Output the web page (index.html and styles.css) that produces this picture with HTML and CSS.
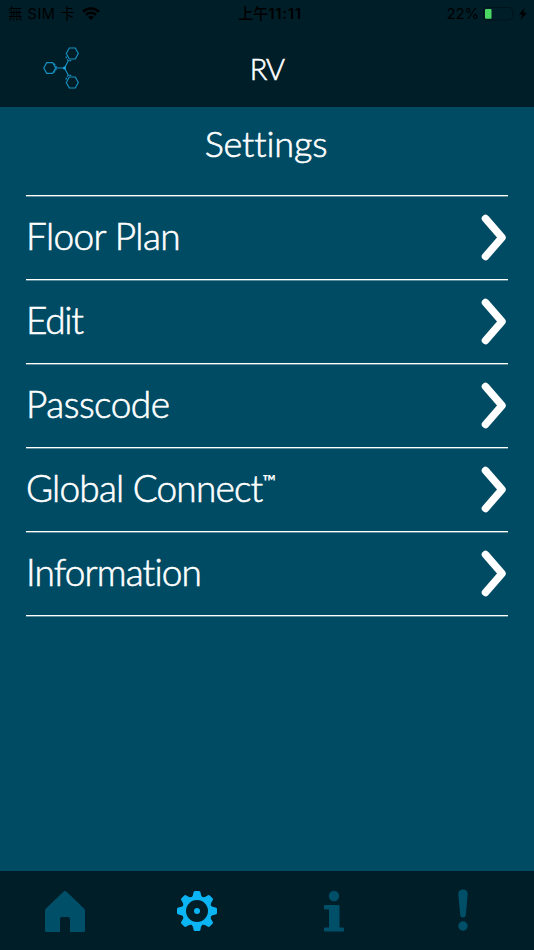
FILE: index.html
```html
<!DOCTYPE html>
<html lang="en">
<head>
  <meta charset="UTF-8">
  <meta name="viewport" content="width=device-width, initial-scale=1.0">
  <title>RV - Settings</title>
  <link rel="stylesheet" href="styles.css">
</head>
<body>
  <header class="top">
    <div class="status-bar">
      <div class="status-left">
        <span class="carrier">無 SIM 卡</span>
        <svg class="wifi" width="18" height="13" viewBox="0 0 18 13" fill="none" stroke="#000" stroke-width="2.5">
          <path d="M1 4.8a11.4 11.4 0 0 1 16 0"/>
          <path d="M3.9 7.9a7.3 7.3 0 0 1 10.2 0"/>
          <path d="M9 13 6.2 10.2a4 4 0 0 1 5.6 0z" fill="#000" stroke="none"/>
        </svg>
      </div>
      <div class="clock">上午<span class="digits">11:11</span></div>
      <div class="status-right">
        <span class="percent">22%</span>
        <svg width="46" height="14" viewBox="0 0 46 14">
          <rect x=".5" y=".5" width="29" height="12.5" rx="3.5" fill="none" stroke="#00131a"/>
          <rect x="2" y="2" width="6.5" height="9.7" rx="1" fill="#4bd964"/>
          <path d="M31.5 4.5q1.8 2 0 4.5z" fill="#00131a"/>
          <path d="M41.5 1 36 7.5h3.4L37.5 12.8l6.5-7h-3.6z" fill="#000"/>
        </svg>
      </div>
    </div>
    <div class="title-bar">
      <svg class="logo" width="36" height="42" viewBox="0 0 36 42" fill="none" stroke="#168fc0" stroke-width="1.2">
        <path d="M13 21h8.5M21.5 21l4-7.5M21.5 21l4 7.5"/>
        <path d="M.8 21 3.7 15.7h6L12.7 21l-3 5.3h-6z"/>
        <path d="M23.3 6.5l3-5.5h6l3 5.5-3 5.5h-6z"/>
        <path d="M23.3 35.500l3-5.500h6l3 5.500-3 5.500h-6z"/>
        <path d="M11.200 16.500 13.800 21l-2.600 4.500M22.800 9.500l2.200 4.200h4.200M22.800 32.500l2.200-4.200h4.200" stroke-dasharray="2 1"/>
        <circle cx="21.5" cy="21" r="1.5" fill="#1aa7df" stroke="none"/>
      </svg>
      <h1>RV</h1>
    </div>
  </header>

  <main class="settings">
    <h2>Settings</h2>
    <ul class="menu">
      <li class="menu-item">
        <span class="label floor">Floor Plan</span>
        <svg class="chevron" viewBox="0 0 26 48"><path d="M4.500 4.500 21 23.500 4.500 42.500"/></svg>
      </li>
      <li class="menu-item">
        <span class="label edit">Edit</span>
        <svg class="chevron" viewBox="0 0 26 48"><path d="M4.500 4.500 21 23.500 4.500 42.500"/></svg>
      </li>
      <li class="menu-item">
        <span class="label passcode">Passcode</span>
        <svg class="chevron" viewBox="0 0 26 48"><path d="M4.500 4.500 21 23.500 4.500 42.500"/></svg>
      </li>
      <li class="menu-item">
        <span class="label global">Global Connect<span class="tm">™</span></span>
        <svg class="chevron" viewBox="0 0 26 48"><path d="M4.500 4.500 21 23.500 4.500 42.500"/></svg>
      </li>
      <li class="menu-item">
        <span class="label info">Information</span>
        <svg class="chevron" viewBox="0 0 26 48"><path d="M4.500 4.500 21 23.500 4.500 42.500"/></svg>
      </li>
    </ul>
  </main>

  <nav class="tab-bar">
    <a class="tab">
      <svg width="42" height="44" viewBox="0 0 42 44">
        <path d="M19.400 2.700q1.600-1.500 3.200 0L40.500 20q.5.600.5 1.500V41.500q0 1.500-1.500 1.500H26V30q0-2-2-2h-6q-2 0-2 2V43H2.500Q1 43 1 41.500V21.500Q1 20.600 1.500 20z"/>
      </svg>
    </a>
    <a class="tab active">
      <svg width="42" height="42" viewBox="-21 -21 42 42">
        <path id="tooth" d="M-5.500-13.500Q-4-15-3.500-18.500q.2-1.500 1.500-1.500h4q1.300 0 1.500 1.500Q4-15 5.500-13.500z"/>
        <use href="#tooth" transform="rotate(45)"/>
        <use href="#tooth" transform="rotate(90)"/>
        <use href="#tooth" transform="rotate(135)"/>
        <use href="#tooth" transform="rotate(180)"/>
        <use href="#tooth" transform="rotate(225)"/>
        <use href="#tooth" transform="rotate(270)"/>
        <use href="#tooth" transform="rotate(315)"/>
        <circle class="ring" r="13"/>
        <circle r="3"/>
      </svg>
    </a>
    <a class="tab">
      <svg width="22" height="42" viewBox="0 0 22 42">
        <circle cx="11" cy="6" r="5.2"/>
        <path d="M2 15H15.500q1 0 1 1V37.500H20q1 0 1 1V40.500q0 1-1 1H2q-1 0-1-1V38.500q0-1 1-1H6V19.500H2q-1 0-1-1V16q0-1 1-1z"/>
      </svg>
    </a>
    <a class="tab">
      <svg width="12" height="44" viewBox="0 0 12 44">
        <path d="M1.300 5.500Q1.300 .5 6 .5T10.700 5.500L8.800 26q-.3 2.500-2.800 2.500T3.200 26z"/>
        <circle cx="6" cy="37" r="4.700"/>
      </svg>
    </a>
  </nav>
</body>
</html>
```
FILE: styles.css
```css
* {
  margin: 0; padding: 0; box-sizing: border-box;
}

body {
  display: flex; flex-direction: column;
  height: 100vh;
  overflow: hidden;
  background: #004b64;
  color: #fff;
  font-family: Lato, "Noto Sans CJK TC", sans-serif;
  font-weight: 300;
  font-variant-ligatures: none;
}

.top {
  height: 107px;
  background: #001e28;
}

.status-bar {
  display: grid;
  grid-template-columns: 1fr auto 1fr;
  align-items: center;
  height: 27px;
  padding: 0 5px 0 8px;
  color: #000;
  font: 400 15px/27px Inter, "Noto Sans CJK TC", sans-serif;
}

.status-left, .status-right { display: flex; align-items: center; }
.status-left { gap: 7px; }
.status-right { justify-content: flex-end; gap: 4px; }
.carrier { font-size: 14.5px; letter-spacing: .5px; }
.clock { font-size: 15px; font-weight: 500; padding-left: 3px; }
.digits { font-weight: 600; letter-spacing: .7px; }
.percent { letter-spacing: -.2px; }

.title-bar {
  display: grid;
  grid-template-columns: 1fr auto 1fr;
  align-items: center;
  height: 80px;
}

.logo { margin: 2px 0 0 43px; }

h1 {
  font-size: 29px;
  font-weight: 300;
  line-height: 40px;
  margin-top: 4px;
  letter-spacing: -.8px;
  -webkit-text-stroke: .6px #fff;
}

.settings {
  flex: 1;
  padding: 0 26px;
}

h2 {
  height: 88px;
  padding-right: 2px;
  font-size: 36px;
  font-weight: 300;
  line-height: 72px;
  letter-spacing: -.15px;
  text-align: center;
  -webkit-text-stroke: .6px #fff;
}

.menu {
  list-style: none;
  border-top: 1px solid #fff;
}

.menu-item {
  display: flex; justify-content: space-between; align-items: center;
  height: 84px;
  border-bottom: 1px solid #fff;
  box-shadow: 0 1px #5c8b9b;
}

.menu-item:first-child { box-shadow: 0 1px #5c8b9b, inset 0 1px #5c8b9b; }

.label {
  height: 84px;
  font-size: 37px;
  line-height: 79px;
  white-space: nowrap;
  -webkit-text-stroke: .6px #fff;
}

.floor { letter-spacing: -.6px; }
.edit { letter-spacing: -1.3px; }
.passcode { letter-spacing: -.5px; }
.global { letter-spacing: -.8px; }
.info { letter-spacing: -.85px; }

.tm {
  font-family: Lato, sans-serif;
  font-weight: 700;
  font-size: 18px;
  letter-spacing: 0;
  line-height: 1;
  vertical-align: 14px;
  -webkit-text-stroke: 0;
}

.chevron {
  width: 26px; height: 48px;
  margin-right: 1px;
  fill: none;
  stroke: #fff;
  stroke-width: 7.5;
  stroke-linecap: round;
  stroke-linejoin: round;
}

.tab-bar {
  display: grid;
  grid-template-columns: 130px 134px 140px 118px;
  height: 79px;
  background: #001e28;
}

.tab {
  display: flex; justify-content: center; align-items: center;
  fill: #004f69;
}

.tab.active { fill: #0bb5f4; }

.ring {
  fill: none;
  stroke: #0bb5f4;
  stroke-width: 4;
}
```
